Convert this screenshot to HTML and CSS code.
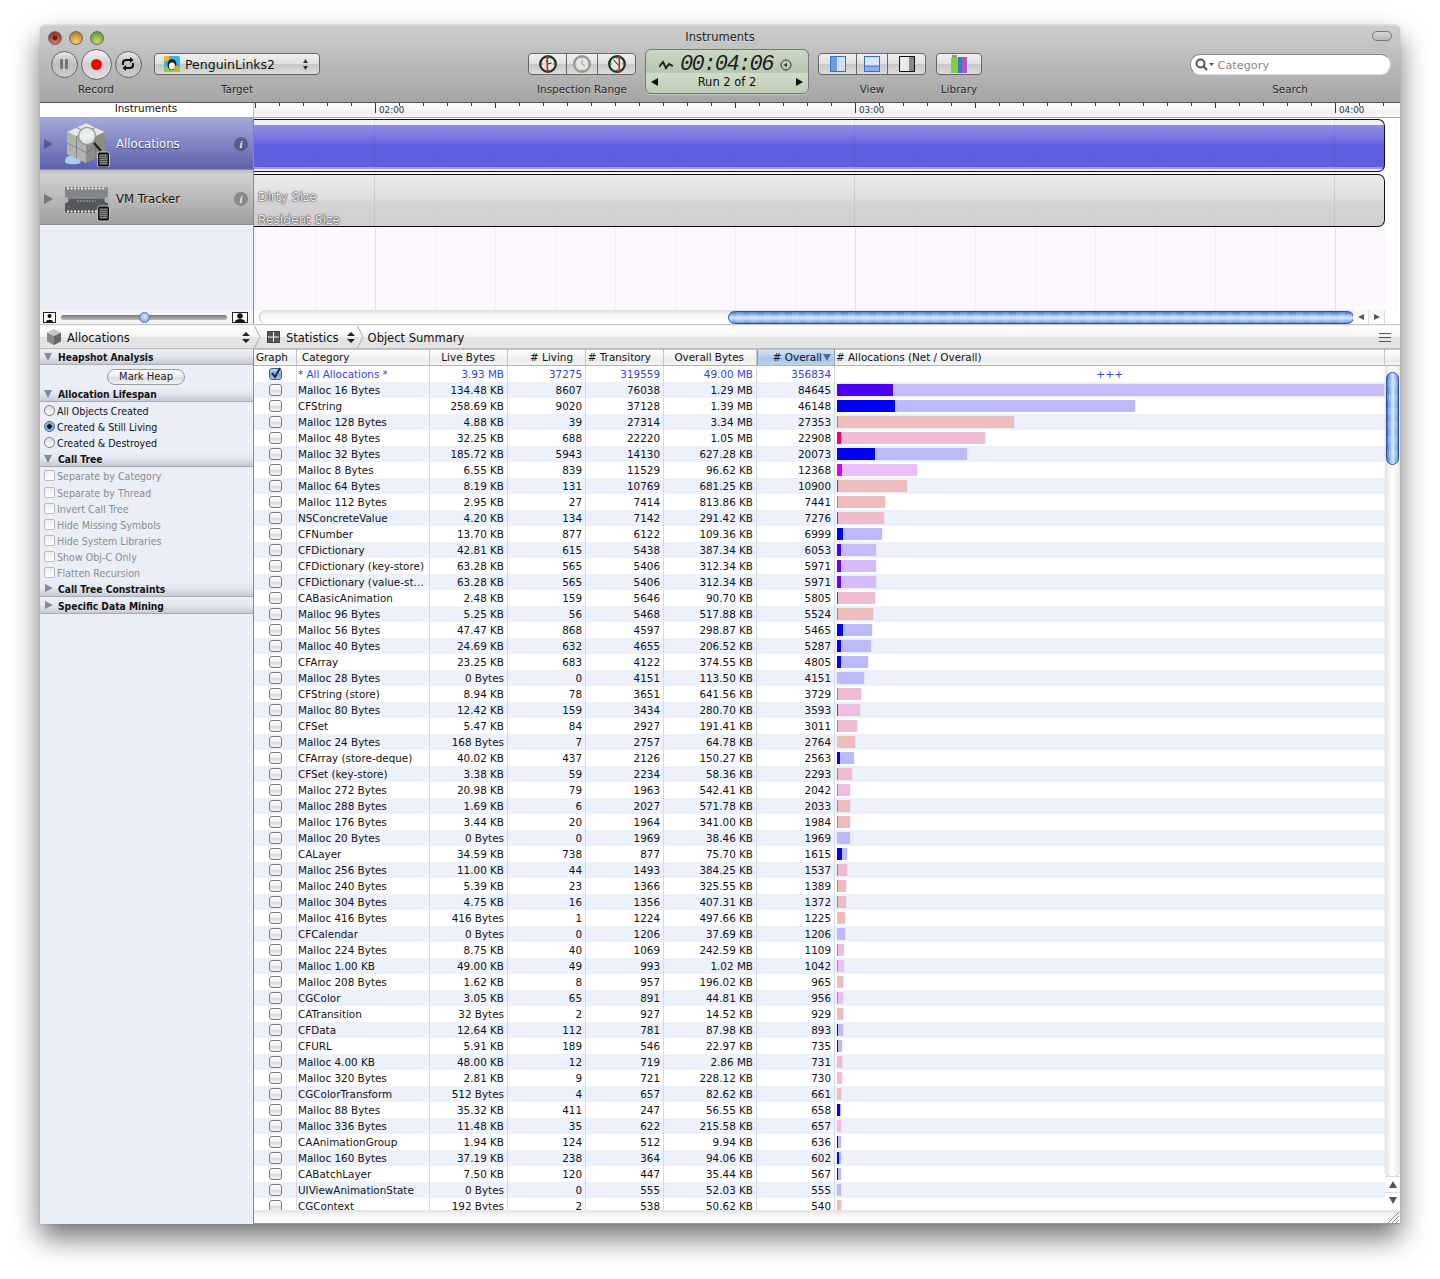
FILE: index.html
```html
<!DOCTYPE html>
<html lang="en">
<head>
<meta charset="utf-8">
<title>Instruments</title>
<link rel="stylesheet" href="styles.css">
</head>
<body>
<div class="window">
  <header class="toolbar">
    <div class="titlebar">
      <div class="lights"><i class="light red"></i><i class="light amber"></i><i class="light green"></i></div>
      <div class="title">Instruments</div>
      <i class="pill"></i>
    </div>
    <div class="tools">
      <div class="tool t-record">
        <div class="control circles">
          <span class="round"><svg width="12" height="12" viewBox="0 0 12 12"><rect x="2" y="1" width="3" height="10" fill="#777"/><rect x="7" y="1" width="3" height="10" fill="#777"/></svg></span>
          <span class="round big"><i class="dot"></i></span>
          <span class="round"><svg width="16" height="16" viewBox="0 0 16 16" fill="none" stroke="#111" stroke-width="2"><path d="M3 9V7a3 3 0 0 1 3-3h6"/><path d="M13 7v2a3 3 0 0 1-3 3H4"/><path d="M10 1l3.500 3L10 7z" fill="#111" stroke="none"/><path d="M6 9l-3.500 3L6 15z" fill="#111" stroke="none"/></svg></span>
        </div>
        <div class="label">Record</div>
      </div>
      <div class="tool t-target">
        <div class="control popup">
          <svg class="appicon" width="16" height="16" viewBox="0 0 16 16"><rect width="16" height="16" rx="2" fill="#35b7e8"/><rect x="0" y="11" width="16" height="5" fill="#8ccf3c"/><rect x="0" y="0" width="5" height="5" fill="#e8b93c"/><ellipse cx="8" cy="8.500" rx="4.500" ry="5.500" fill="#222"/><ellipse cx="8" cy="10" rx="3" ry="3.500" fill="#fff"/><circle cx="12" cy="12" r="2.500" fill="#f0a030"/></svg>
          <span class="popup-text">PenguinLinks2</span>
          <svg width="7" height="11" viewBox="0 0 7 11"><path d="M3.500 0L6 4H1zM3.500 11L6 7H1z" fill="#333"/></svg>
        </div>
        <div class="label">Target</div>
      </div>
      <div class="tool t-range">
        <div class="control seg">
          <span class="seg-cell s1"><svg width="20" height="20" viewBox="0 0 20 20"><circle cx="10" cy="10" r="7.800" fill="#e4e8e4" stroke="#1c3a28" stroke-width="2.400"/><path d="M10 10L8 6.500M10 10l3.500-1" stroke="#222" fill="none"/><path d="M10 4v1M10 15v1M4 10h1M15 10h1" stroke="#555"/><rect x="8.500" y="1" width="1.600" height="18" fill="#d8201c"/></svg></span>
          <span class="seg-cell s2"><svg width="20" height="20" viewBox="0 0 20 20"><circle cx="10" cy="10" r="7.800" fill="#e6e6e0" stroke="#929a90" stroke-width="2.400"/><path d="M10 10V6M10 10l3 2" stroke="#999" fill="none"/><path d="M10 4v1M10 15v1M4 10h1M15 10h1" stroke="#aaa"/></svg></span>
          <span class="seg-cell s3"><svg width="20" height="20" viewBox="0 0 20 20"><circle cx="10" cy="10" r="7.800" fill="#e4e8e4" stroke="#1c3a28" stroke-width="2.400"/><path d="M10 10L7 6M10 10l3 2" stroke="#222" fill="none"/><path d="M10 4v1M10 15v1M4 10h1M15 10h1" stroke="#555"/><rect x="11.500" y="1" width="1.600" height="18" fill="#d8201c"/></svg></span>
        </div>
        <div class="label">Inspection Range</div>
      </div>
      <div class="lcd">
        <div class="lcd-top">
          <svg width="14" height="10" viewBox="0 0 14 10" fill="none" stroke="#222" stroke-width="2"><path d="M0 7l4-5 3 6 3-4 4 2"/></svg>
          <span class="lcd-time">00:04:06</span>
          <svg width="12" height="12" viewBox="0 0 12 12"><circle cx="6" cy="6" r="5" fill="none" stroke="#333"/><path d="M3.500 6l3.500-2v4z" fill="#333"/></svg>
        </div>
        <div class="lcd-run">
          <i class="tri-left"></i>
          <span>Run 2 of 2</span>
          <i class="tri-right"></i>
        </div>
      </div>
      <div class="tool t-view">
        <div class="control seg">
          <span class="seg-cell s1"><svg width="16" height="16" viewBox="0 0 16 16"><rect x=".5" y=".5" width="15" height="15" fill="#d4dff2" stroke="#3a6fd0"/><rect x="1" y="1" width="6" height="14" fill="#6f9be0"/></svg></span>
          <span class="seg-cell s2"><svg width="16" height="16" viewBox="0 0 16 16"><rect x=".5" y=".5" width="15" height="15" fill="#dde6f4" stroke="#3a6fd0"/><rect x="1" y="10" width="14" height="5" fill="#8cb0e8"/><path d="M1 10h14" stroke="#3a6fd0"/></svg></span>
          <span class="seg-cell s3"><svg width="16" height="16" viewBox="0 0 16 16"><rect x=".5" y=".5" width="15" height="15" fill="#e8e8e8" stroke="#111"/><rect x="10" y="1" width="5" height="14" fill="#888"/></svg></span>
        </div>
        <div class="label">View</div>
      </div>
      <div class="tool t-library">
        <div class="control button">
          <svg width="18" height="18" viewBox="0 0 18 18"><rect x="1" y="3" width="7" height="15" fill="#8ccb3a"/><rect x="2" y="0" width="5" height="3" fill="#9a9a80"/><rect x="8" y="2" width="4" height="16" fill="#3b79c8"/><rect x="12" y="2" width="5" height="16" fill="#a65ac8"/></svg>
        </div>
        <div class="label">Library</div>
      </div>
      <div class="tool t-search">
        <div class="control search">
          <svg width="20" height="13" viewBox="0 0 20 13" fill="none" stroke="#555" stroke-width="2"><circle cx="5.500" cy="5.500" r="4"/><path d="M8.500 8.500l3.500 3.500"/><path d="M14 5h5l-2.500 3z" fill="#555" stroke="none"/></svg>
          <span class="placeholder">Category</span>
        </div>
        <div class="label">Search</div>
      </div>
    </div>
  </header>

  <div class="ruler-row">
    <div class="ruler-side">Instruments</div>
    <div class="ruler">
      <div class="ruler-ticks">
        <div class="mark first">02:00</div>
        <div class="mark">03:00</div>
        <div class="mark">04:00</div>
      </div>
    </div>
  </div>

  <div class="timeline">
    <div class="inst-list">
      <div class="inst sel">
        <i class="tri-r"></i>
        <svg class="inst-icon" width="48" height="46" viewBox="0 0 48 46">
          <path d="M3 39c2-6 8-5 12-3s6 6 0 7-13 0-12-4z" fill="#a9cdea"/>
          <path d="M24 2l19 9-19 9-19-9z" fill="#e6e6e2" stroke="#aaa" stroke-width=".5"/>
          <path d="M5 11l19 9v22L5 33z" fill="#b4b4ae"/>
          <path d="M43 11L24 20v22l19-9z" fill="#8d8d86"/>
          <path d="M14.500 15.500v22M5 22l19 9.500M33.500 15.500v22M43 22L24 31.500M14.500 6.500l19 9M33.500 6.500l-19 9" stroke="#777" stroke-width=".8" fill="none"/>
          <circle cx="25" cy="15" r="8.500" fill="#eef2f4" fill-opacity=".85" stroke="#999" stroke-width="1.500"/>
          <path d="M32 22l7 8" stroke="#222" stroke-width="2.500"/>
          <rect x="35.500" y="31" width="12" height="15" rx="2" fill="#111" stroke="#ddd" stroke-width=".8"/>
          <rect x="37.500" y="33.500" width="8" height="10" fill="#888"/>
          <path d="M37.500 35.500h8M37.500 37.500h8M37.500 39.500h8M37.500 41.500h8" stroke="#333" stroke-width=".7"/>
        </svg>
        <span class="inst-name">Allocations</span>
        <i class="info">i</i>
      </div>
      <div class="inst-gap"></div>
      <div class="inst vm">
        <i class="tri-r"></i>
        <svg class="inst-icon" width="48" height="46" viewBox="0 0 48 46">
          <rect x="3" y="11" width="43" height="26" rx="2" fill="#55585a"/>
          <rect x="3" y="11" width="43" height="12" rx="2" fill="#838688"/>
          <path d="M5 12.500h39M5 35.500h39" stroke="#ececec" stroke-width="2" stroke-dasharray="2 1.500"/>
          <circle cx="3.500" cy="24" r="3" fill="#b0b2b4"/>
          <circle cx="45.500" cy="24" r="3" fill="#b0b2b4"/>
          <path d="M15 22h19M15 25h19" stroke="#8c8e90" stroke-width="1.500" stroke-dasharray="2 1"/>
          <rect x="35.500" y="30" width="12" height="15" rx="2" fill="#111" stroke="#ddd" stroke-width=".8"/>
          <rect x="37.500" y="32.500" width="8" height="10" fill="#888"/>
          <path d="M37.500 34.500h8M37.500 36.500h8M37.500 38.500h8M37.500 40.500h8" stroke="#333" stroke-width=".7"/>
        </svg>
        <span class="inst-name">VM Tracker</span>
        <i class="info">i</i>
      </div>
    </div>
    <div class="tracks">
      <div class="track purple"></div>
      <div class="track grey">
        <div class="track-label">Dirty Size</div>
        <div class="track-label">Resident Size</div>
      </div>
    </div>
  </div>

  <div class="slider-row">
    <div class="zoomer">
      <svg width="13" height="11" viewBox="0 0 13 11"><rect x=".5" y=".5" width="12" height="10" fill="#fff" stroke="#222"/><circle cx="6.500" cy="4" r="2" fill="#111"/><path d="M3 10c0-3 7-3 7 0z" fill="#111"/></svg>
      <div class="zoom-track"><i class="zoom-knob"></i></div>
      <svg width="16" height="11" viewBox="0 0 16 11"><rect x=".5" y=".5" width="15" height="10" fill="#fff" stroke="#222"/><circle cx="8" cy="4" r="2.800" fill="#111"/><path d="M3 10c0-4 10-4 10 0z" fill="#111"/></svg>
    </div>
    <div class="hscroll">
      <div class="hscroll-track"><i class="hthumb"></i></div>
      <span class="harrow"><i class="tri-left small"></i></span>
      <span class="harrow"><i class="tri-right small"></i></span>
    </div>
  </div>

  <div class="jumpbar">
    <div class="jump-first">
      <svg width="18" height="18" viewBox="0 0 18 18"><path d="M9 1l7 3.500L9 8 2 4.500z" fill="#c8c8c8"/><path d="M2 4.500L9 8v9l-7-3.500z" fill="#888"/><path d="M16 4.500L9 8v9l7-3.500z" fill="#666"/></svg>
      <span class="jump-name">Allocations</span>
      <i class="updown"></i>
    </div>
    <svg class="crumb" width="7" height="22" viewBox="0 0 7 22"><path d="M.5 0l5.500 11L.5 22" fill="none" stroke="#aaa"/></svg>
    <svg class="gridicon" width="13" height="12" viewBox="0 0 13 12"><rect x=".5" y=".5" width="12" height="11" fill="#fff" stroke="#444"/><rect x="1" y="1" width="5" height="4.500" fill="#555"/><rect x="7" y="1" width="5" height="4.500" fill="#555"/><rect x="1" y="6.500" width="5" height="4.500" fill="#555"/><rect x="7" y="6.500" width="5" height="4.500" fill="#555"/></svg>
    <span class="jump-name stats">Statistics</span>
    <i class="updown"></i>
    <svg class="crumb second" width="7" height="22" viewBox="0 0 7 22"><path d="M.5 0l5.500 11L.5 22" fill="none" stroke="#aaa"/></svg>
    <span class="jump-name">Object Summary</span>
    <svg class="listicon" width="12" height="9" viewBox="0 0 12 9" stroke="#555"><path d="M0 .5h12M0 4.500h12M0 8.500h12"/></svg>
  </div>

  <div class="detail">
    <aside class="side">
      <div class="sec open">Heapshot Analysis</div>
      <div class="mark-row"><button class="markheap">Mark Heap</button></div>
      <div class="sec open after">Allocation Lifespan</div>
      <div class="opt"><i class="radio"></i>All Objects Created</div>
      <div class="opt"><i class="radio on"></i>Created &amp; Still Living</div>
      <div class="opt"><i class="radio"></i>Created &amp; Destroyed</div>
      <div class="sec open">Call Tree</div>
      <div class="opt off tall"><i class="box"></i>Separate by Category</div>
      <div class="opt off"><i class="box"></i>Separate by Thread</div>
      <div class="opt off"><i class="box"></i>Invert Call Tree</div>
      <div class="opt off"><i class="box"></i>Hide Missing Symbols</div>
      <div class="opt off"><i class="box"></i>Hide System Libraries</div>
      <div class="opt off"><i class="box"></i>Show Obj-C Only</div>
      <div class="opt off"><i class="box"></i>Flatten Recursion</div>
      <div class="sec shut">Call Tree Constraints</div>
      <div class="sec shut">Specific Data Mining</div>
    </aside>
    <main class="main">
      <div class="table-area">
        <div class="table-clip">
          <table class="stats-table">
            <colgroup><col class="c1"><col class="c2"><col class="c3"><col class="c4"><col class="c5"><col class="c6"><col class="c7"><col class="c8"></colgroup>
            <thead>
              <tr><th class="th-left tight">Graph</th><th class="th-left">Category</th><th>Live Bytes</th><th># Living</th><th># Transitory</th><th>Overall Bytes</th><th class="sorted"># Overall<i class="sort-arrow"></i></th><th class="th-left th-last"># Allocations (Net / Overall)</th></tr>
            </thead>
            <tbody>
              <tr class="all"><td class="g"><i class="cb on"><svg width="12" height="12" viewBox="0 0 12 12"><path d="M2 6l3 4 5-9" fill="none" stroke="#1a2a50" stroke-width="2"/></svg></i></td><td class="name">* All Allocations *</td><td class="n">3.93 MB</td><td class="n">37275</td><td class="n">319559</td><td class="n">49.00 MB</td><td class="n">356834</td><td class="plus">+++</td></tr>
              <tr><td class="g"><i class="cb"></i></td><td class="name">Malloc 16 Bytes</td><td class="n">134.48 KB</td><td class="n">8607</td><td class="n">76038</td><td class="n">1.29 MB</td><td class="n">84645</td><td class="b"><span class="bar violet" style="width:547px"><i class="net" style="width:55.6px"></i></span></td></tr>
              <tr><td class="g"><i class="cb"></i></td><td class="name">CFString</td><td class="n">258.69 KB</td><td class="n">9020</td><td class="n">37128</td><td class="n">1.39 MB</td><td class="n">46148</td><td class="b"><span class="bar blue" style="width:298.2px"><i class="net" style="width:58.3px"></i></span></td></tr>
              <tr><td class="g"><i class="cb"></i></td><td class="name">Malloc 128 Bytes</td><td class="n">4.88 KB</td><td class="n">39</td><td class="n">27314</td><td class="n">3.34 MB</td><td class="n">27353</td><td class="b"><span class="bar red" style="width:176.8px"><i class="net tiny"></i></span></td></tr>
              <tr><td class="g"><i class="cb"></i></td><td class="name">Malloc 48 Bytes</td><td class="n">32.25 KB</td><td class="n">688</td><td class="n">22220</td><td class="n">1.05 MB</td><td class="n">22908</td><td class="b"><span class="bar rose" style="width:148px"><i class="net" style="width:4.4px"></i></span></td></tr>
              <tr><td class="g"><i class="cb"></i></td><td class="name">Malloc 32 Bytes</td><td class="n">185.72 KB</td><td class="n">5943</td><td class="n">14130</td><td class="n">627.28 KB</td><td class="n">20073</td><td class="b"><span class="bar blue" style="width:129.7px"><i class="net" style="width:38.4px"></i></span></td></tr>
              <tr><td class="g"><i class="cb"></i></td><td class="name">Malloc 8 Bytes</td><td class="n">6.55 KB</td><td class="n">839</td><td class="n">11529</td><td class="n">96.62 KB</td><td class="n">12368</td><td class="b"><span class="bar magenta" style="width:79.9px"><i class="net" style="width:5.4px"></i></span></td></tr>
              <tr><td class="g"><i class="cb"></i></td><td class="name">Malloc 64 Bytes</td><td class="n">8.19 KB</td><td class="n">131</td><td class="n">10769</td><td class="n">681.25 KB</td><td class="n">10900</td><td class="b"><span class="bar red" style="width:70.4px"><i class="net" style="width:1px"></i></span></td></tr>
              <tr><td class="g"><i class="cb"></i></td><td class="name">Malloc 112 Bytes</td><td class="n">2.95 KB</td><td class="n">27</td><td class="n">7414</td><td class="n">813.86 KB</td><td class="n">7441</td><td class="b"><span class="bar red" style="width:48px"><i class="net tiny"></i></span></td></tr>
              <tr><td class="g"><i class="cb"></i></td><td class="name">NSConcreteValue</td><td class="n">4.20 KB</td><td class="n">134</td><td class="n">7142</td><td class="n">291.42 KB</td><td class="n">7276</td><td class="b"><span class="bar rose2" style="width:47px"><i class="net" style="width:1px"></i></span></td></tr>
              <tr><td class="g"><i class="cb"></i></td><td class="name">CFNumber</td><td class="n">13.70 KB</td><td class="n">877</td><td class="n">6122</td><td class="n">109.36 KB</td><td class="n">6999</td><td class="b"><span class="bar blue" style="width:45.2px"><i class="net" style="width:5.7px"></i></span></td></tr>
              <tr><td class="g"><i class="cb"></i></td><td class="name">CFDictionary</td><td class="n">42.81 KB</td><td class="n">615</td><td class="n">5438</td><td class="n">387.34 KB</td><td class="n">6053</td><td class="b"><span class="bar violet" style="width:39.1px"><i class="net" style="width:4px"></i></span></td></tr>
              <tr><td class="g"><i class="cb"></i></td><td class="name">CFDictionary (key-store)</td><td class="n">63.28 KB</td><td class="n">565</td><td class="n">5406</td><td class="n">312.34 KB</td><td class="n">5971</td><td class="b"><span class="bar purple" style="width:38.6px"><i class="net" style="width:3.7px"></i></span></td></tr>
              <tr><td class="g"><i class="cb"></i></td><td class="name">CFDictionary (value-st…</td><td class="n">63.28 KB</td><td class="n">565</td><td class="n">5406</td><td class="n">312.34 KB</td><td class="n">5971</td><td class="b"><span class="bar purple" style="width:38.6px"><i class="net" style="width:3.7px"></i></span></td></tr>
              <tr><td class="g"><i class="cb"></i></td><td class="name">CABasicAnimation</td><td class="n">2.48 KB</td><td class="n">159</td><td class="n">5646</td><td class="n">90.70 KB</td><td class="n">5805</td><td class="b"><span class="bar rose" style="width:37.5px"><i class="net" style="width:1px"></i></span></td></tr>
              <tr><td class="g"><i class="cb"></i></td><td class="name">Malloc 96 Bytes</td><td class="n">5.25 KB</td><td class="n">56</td><td class="n">5468</td><td class="n">517.88 KB</td><td class="n">5524</td><td class="b"><span class="bar red" style="width:35.7px"><i class="net tiny"></i></span></td></tr>
              <tr><td class="g"><i class="cb"></i></td><td class="name">Malloc 56 Bytes</td><td class="n">47.47 KB</td><td class="n">868</td><td class="n">4597</td><td class="n">298.87 KB</td><td class="n">5465</td><td class="b"><span class="bar blue" style="width:35.3px"><i class="net" style="width:5.6px"></i></span></td></tr>
              <tr><td class="g"><i class="cb"></i></td><td class="name">Malloc 40 Bytes</td><td class="n">24.69 KB</td><td class="n">632</td><td class="n">4655</td><td class="n">206.52 KB</td><td class="n">5287</td><td class="b"><span class="bar blue" style="width:34.2px"><i class="net" style="width:4px"></i></span></td></tr>
              <tr><td class="g"><i class="cb"></i></td><td class="name">CFArray</td><td class="n">23.25 KB</td><td class="n">683</td><td class="n">4122</td><td class="n">374.55 KB</td><td class="n">4805</td><td class="b"><span class="bar blue" style="width:31px"><i class="net" style="width:4.4px"></i></span></td></tr>
              <tr><td class="g"><i class="cb"></i></td><td class="name">Malloc 28 Bytes</td><td class="n">0 Bytes</td><td class="n">0</td><td class="n">4151</td><td class="n">113.50 KB</td><td class="n">4151</td><td class="b"><span class="bar blue" style="width:26.8px"></span></td></tr>
              <tr><td class="g"><i class="cb"></i></td><td class="name">CFString (store)</td><td class="n">8.94 KB</td><td class="n">78</td><td class="n">3651</td><td class="n">641.56 KB</td><td class="n">3729</td><td class="b"><span class="bar rose" style="width:24px"><i class="net tiny"></i></span></td></tr>
              <tr><td class="g"><i class="cb"></i></td><td class="name">Malloc 80 Bytes</td><td class="n">12.42 KB</td><td class="n">159</td><td class="n">3434</td><td class="n">280.70 KB</td><td class="n">3593</td><td class="b"><span class="bar orchid" style="width:23.2px"><i class="net" style="width:1px"></i></span></td></tr>
              <tr><td class="g"><i class="cb"></i></td><td class="name">CFSet</td><td class="n">5.47 KB</td><td class="n">84</td><td class="n">2927</td><td class="n">191.41 KB</td><td class="n">3011</td><td class="b"><span class="bar rose" style="width:19.5px"><i class="net tiny"></i></span></td></tr>
              <tr><td class="g"><i class="cb"></i></td><td class="name">Malloc 24 Bytes</td><td class="n">168 Bytes</td><td class="n">7</td><td class="n">2757</td><td class="n">64.78 KB</td><td class="n">2764</td><td class="b"><span class="bar red" style="width:17.9px"></span></td></tr>
              <tr><td class="g"><i class="cb"></i></td><td class="name">CFArray (store-deque)</td><td class="n">40.02 KB</td><td class="n">437</td><td class="n">2126</td><td class="n">150.27 KB</td><td class="n">2563</td><td class="b"><span class="bar blue" style="width:16.6px"><i class="net" style="width:2.8px"></i></span></td></tr>
              <tr><td class="g"><i class="cb"></i></td><td class="name">CFSet (key-store)</td><td class="n">3.38 KB</td><td class="n">59</td><td class="n">2234</td><td class="n">58.36 KB</td><td class="n">2293</td><td class="b"><span class="bar rose" style="width:14.8px"><i class="net tiny"></i></span></td></tr>
              <tr><td class="g"><i class="cb"></i></td><td class="name">Malloc 272 Bytes</td><td class="n">20.98 KB</td><td class="n">79</td><td class="n">1963</td><td class="n">542.41 KB</td><td class="n">2042</td><td class="b"><span class="bar orchid" style="width:13.2px"><i class="net tiny"></i></span></td></tr>
              <tr><td class="g"><i class="cb"></i></td><td class="name">Malloc 288 Bytes</td><td class="n">1.69 KB</td><td class="n">6</td><td class="n">2027</td><td class="n">571.78 KB</td><td class="n">2033</td><td class="b"><span class="bar red" style="width:13.1px"><i class="net tiny"></i></span></td></tr>
              <tr><td class="g"><i class="cb"></i></td><td class="name">Malloc 176 Bytes</td><td class="n">3.44 KB</td><td class="n">20</td><td class="n">1964</td><td class="n">341.00 KB</td><td class="n">1984</td><td class="b"><span class="bar red" style="width:12.8px"><i class="net tiny"></i></span></td></tr>
              <tr><td class="g"><i class="cb"></i></td><td class="name">Malloc 20 Bytes</td><td class="n">0 Bytes</td><td class="n">0</td><td class="n">1969</td><td class="n">38.46 KB</td><td class="n">1969</td><td class="b"><span class="bar blue" style="width:12.7px"></span></td></tr>
              <tr><td class="g"><i class="cb"></i></td><td class="name">CALayer</td><td class="n">34.59 KB</td><td class="n">738</td><td class="n">877</td><td class="n">75.70 KB</td><td class="n">1615</td><td class="b"><span class="bar blue" style="width:10.4px"><i class="net" style="width:4.8px"></i></span></td></tr>
              <tr><td class="g"><i class="cb"></i></td><td class="name">Malloc 256 Bytes</td><td class="n">11.00 KB</td><td class="n">44</td><td class="n">1493</td><td class="n">384.25 KB</td><td class="n">1537</td><td class="b"><span class="bar rose" style="width:9.9px"><i class="net tiny"></i></span></td></tr>
              <tr><td class="g"><i class="cb"></i></td><td class="name">Malloc 240 Bytes</td><td class="n">5.39 KB</td><td class="n">23</td><td class="n">1366</td><td class="n">325.55 KB</td><td class="n">1389</td><td class="b"><span class="bar red" style="width:9px"><i class="net tiny"></i></span></td></tr>
              <tr><td class="g"><i class="cb"></i></td><td class="name">Malloc 304 Bytes</td><td class="n">4.75 KB</td><td class="n">16</td><td class="n">1356</td><td class="n">407.31 KB</td><td class="n">1372</td><td class="b"><span class="bar red" style="width:8.9px"><i class="net tiny"></i></span></td></tr>
              <tr><td class="g"><i class="cb"></i></td><td class="name">Malloc 416 Bytes</td><td class="n">416 Bytes</td><td class="n">1</td><td class="n">1224</td><td class="n">497.66 KB</td><td class="n">1225</td><td class="b"><span class="bar red" style="width:7.9px"></span></td></tr>
              <tr><td class="g"><i class="cb"></i></td><td class="name">CFCalendar</td><td class="n">0 Bytes</td><td class="n">0</td><td class="n">1206</td><td class="n">37.69 KB</td><td class="n">1206</td><td class="b"><span class="bar blue" style="width:7.8px"></span></td></tr>
              <tr><td class="g"><i class="cb"></i></td><td class="name">Malloc 224 Bytes</td><td class="n">8.75 KB</td><td class="n">40</td><td class="n">1069</td><td class="n">242.59 KB</td><td class="n">1109</td><td class="b"><span class="bar orchid" style="width:7.2px"><i class="net tiny"></i></span></td></tr>
              <tr><td class="g"><i class="cb"></i></td><td class="name">Malloc 1.00 KB</td><td class="n">49.00 KB</td><td class="n">49</td><td class="n">993</td><td class="n">1.02 MB</td><td class="n">1042</td><td class="b"><span class="bar magenta" style="width:6.7px"><i class="net tiny"></i></span></td></tr>
              <tr><td class="g"><i class="cb"></i></td><td class="name">Malloc 208 Bytes</td><td class="n">1.62 KB</td><td class="n">8</td><td class="n">957</td><td class="n">196.02 KB</td><td class="n">965</td><td class="b"><span class="bar red" style="width:6.2px"></span></td></tr>
              <tr><td class="g"><i class="cb"></i></td><td class="name">CGColor</td><td class="n">3.05 KB</td><td class="n">65</td><td class="n">891</td><td class="n">44.81 KB</td><td class="n">956</td><td class="b"><span class="bar magenta" style="width:6.2px"><i class="net tiny"></i></span></td></tr>
              <tr><td class="g"><i class="cb"></i></td><td class="name">CATransition</td><td class="n">32 Bytes</td><td class="n">2</td><td class="n">927</td><td class="n">14.52 KB</td><td class="n">929</td><td class="b"><span class="bar red" style="width:6px"></span></td></tr>
              <tr><td class="g"><i class="cb"></i></td><td class="name">CFData</td><td class="n">12.64 KB</td><td class="n">112</td><td class="n">781</td><td class="n">87.98 KB</td><td class="n">893</td><td class="b"><span class="bar blue" style="width:5.8px"><i class="net" style="width:1px"></i></span></td></tr>
              <tr><td class="g"><i class="cb"></i></td><td class="name">CFURL</td><td class="n">5.91 KB</td><td class="n">189</td><td class="n">546</td><td class="n">22.97 KB</td><td class="n">735</td><td class="b"><span class="bar blue" style="width:4.7px"><i class="net" style="width:1.2px"></i></span></td></tr>
              <tr><td class="g"><i class="cb"></i></td><td class="name">Malloc 4.00 KB</td><td class="n">48.00 KB</td><td class="n">12</td><td class="n">719</td><td class="n">2.86 MB</td><td class="n">731</td><td class="b"><span class="bar rose" style="width:4.7px"></span></td></tr>
              <tr><td class="g"><i class="cb"></i></td><td class="name">Malloc 320 Bytes</td><td class="n">2.81 KB</td><td class="n">9</td><td class="n">721</td><td class="n">228.12 KB</td><td class="n">730</td><td class="b"><span class="bar rose" style="width:4.7px"></span></td></tr>
              <tr><td class="g"><i class="cb"></i></td><td class="name">CGColorTransform</td><td class="n">512 Bytes</td><td class="n">4</td><td class="n">657</td><td class="n">82.62 KB</td><td class="n">661</td><td class="b"><span class="bar red" style="width:4.3px"></span></td></tr>
              <tr><td class="g"><i class="cb"></i></td><td class="name">Malloc 88 Bytes</td><td class="n">35.32 KB</td><td class="n">411</td><td class="n">247</td><td class="n">56.55 KB</td><td class="n">658</td><td class="b"><span class="bar blue" style="width:4.3px"><i class="net" style="width:2.7px"></i></span></td></tr>
              <tr><td class="g"><i class="cb"></i></td><td class="name">Malloc 336 Bytes</td><td class="n">11.48 KB</td><td class="n">35</td><td class="n">622</td><td class="n">215.58 KB</td><td class="n">657</td><td class="b"><span class="bar orchid" style="width:4.2px"></span></td></tr>
              <tr><td class="g"><i class="cb"></i></td><td class="name">CAAnimationGroup</td><td class="n">1.94 KB</td><td class="n">124</td><td class="n">512</td><td class="n">9.94 KB</td><td class="n">636</td><td class="b"><span class="bar blue" style="width:4.1px"><i class="net" style="width:1px"></i></span></td></tr>
              <tr><td class="g"><i class="cb"></i></td><td class="name">Malloc 160 Bytes</td><td class="n">37.19 KB</td><td class="n">238</td><td class="n">364</td><td class="n">94.06 KB</td><td class="n">602</td><td class="b"><span class="bar blue" style="width:3.9px"><i class="net" style="width:1.5px"></i></span></td></tr>
              <tr><td class="g"><i class="cb"></i></td><td class="name">CABatchLayer</td><td class="n">7.50 KB</td><td class="n">120</td><td class="n">447</td><td class="n">35.44 KB</td><td class="n">567</td><td class="b"><span class="bar blue" style="width:3.7px"><i class="net" style="width:1px"></i></span></td></tr>
              <tr><td class="g"><i class="cb"></i></td><td class="name">UIViewAnimationState</td><td class="n">0 Bytes</td><td class="n">0</td><td class="n">555</td><td class="n">52.03 KB</td><td class="n">555</td><td class="b"><span class="bar blue" style="width:3.6px"></span></td></tr>
              <tr><td class="g"><i class="cb"></i></td><td class="name">CGContext</td><td class="n">192 Bytes</td><td class="n">2</td><td class="n">538</td><td class="n">50.62 KB</td><td class="n">540</td><td class="b"><span class="bar red" style="width:3.5px"></span></td></tr>
            </tbody>
          </table>
        </div>
        <div class="vscroll">
          <div class="vcorner"></div>
          <div class="vtrack"><i class="vthumb"></i></div>
          <span class="varrow"><i class="tri-up"></i></span>
          <span class="varrow"><i class="tri-down"></i></span>
        </div>
      </div>
      <div class="footer">
        <svg class="grip" width="11" height="11" viewBox="0 0 11 11" stroke="#888" fill="none"><path d="M0 11L11 0M4 11l7-7M8 11l3-3"/></svg>
      </div>
    </main>
  </div>
</div>
</body>
</html>
```

FILE: styles.css
```css
* { box-sizing: border-box; }
html, body { margin: 0; padding: 0; background: #fff; }
body { height: 1279px; overflow: hidden; padding: 25px 40px 0; font: 10.4px/16px "DejaVu Sans", sans-serif; color: #111; }
i { display: block; font-style: normal; }

.window { width: 1360px; height: 1199px; display: flex; flex-direction: column; border-radius: 5px 5px 0 0; box-shadow: 0 14px 28px rgba(0,0,0,.55), 0 0 1px rgba(0,0,0,.5); background: #e9eef7; }

/* toolbar */
.toolbar { height: 77px; flex: none; background: linear-gradient(#cdcdcd, #a6a6a6); border-radius: 5px 5px 0 0; border-top: 1px solid #d8d8d8; }
.titlebar { height: 23px; display: flex; align-items: center; padding: 0 8px; }
.lights { display: flex; gap: 7px; margin-top: 1px; }
.light { width: 14px; height: 14px; border-radius: 50%; border: 1px solid #6a6a6a; }
.light.red { background: radial-gradient(circle at 50% 50%, #6d1a14 0 2px, transparent 3px), radial-gradient(circle at 50% 80%, #e07a66, #a5352a 75%); }
.light.amber { background: radial-gradient(circle at 50% 80%, #f8d070, #c07a20 80%); }
.light.green { background: radial-gradient(circle at 50% 80%, #c0e070, #6a9a30 80%); }
.title { flex: 1; text-align: center; font-size: 11.5px; line-height: 20px; padding-bottom: 2px; color: #222; text-shadow: 0 1px 0 rgba(255,255,255,.4); padding-right: 36px; }
.pill { width: 20px; height: 10px; border-radius: 5px; border: 1px solid #777; background: linear-gradient(#d6d6d6, #b8b8b8); margin-bottom: 3px; }
.tools { display: flex; align-items: flex-start; padding-left: 11px; }
.tool { display: flex; flex-direction: column; align-items: center; padding-top: 4px; }
.control { height: 22px; display: flex; align-items: center; }
.label { margin-top: 6px; height: 16px; color: #2a2a2a; text-shadow: 0 1px 0 rgba(255,255,255,.35); white-space: nowrap; }

.t-record { width: 90px; }
.circles { gap: 3px; }
.round { width: 27px; height: 27px; border-radius: 50%; border: 1px solid #666; background: linear-gradient(#e9e9e9, #bdbdbd 50%, #cfcfcf); display: flex; align-items: center; justify-content: center; flex: none; }
.round.big { width: 31px; height: 31px; background: linear-gradient(#f4f4f4, #d0d0d0 50%, #e0e0e0); }
.dot { width: 11px; height: 11px; border-radius: 50%; background: #f00; }
.t-target { width: 166px; margin-left: 13px; }
.popup { width: 166px; padding: 0 10px 0 9px; border: 1px solid #666; border-radius: 4px; background: linear-gradient(#f0f0f0, #e0e0e0 50%, #c8c8c8 52%, #dcdcdc); gap: 6px; }
.popup-text { flex: 1; font-size: 12.5px; line-height: 20px; padding-top: 1px; margin-left: -1px; }
.t-range { width: 108px; margin-left: 208px; }
.seg { width: 100%; border: 1px solid #666; border-radius: 4px; background: linear-gradient(#f0f0f0, #e0e0e0 50%, #c8c8c8 52%, #dcdcdc); overflow: hidden; }
.seg-cell { height: 100%; display: flex; align-items: center; justify-content: center; border-right: 1px solid #666; }
.seg-cell.s1 { width: 38px; }
.seg-cell.s2 { width: 31px; }
.seg-cell.s3 { flex: 1; border-right: 0; }
.lcd { width: 164px; height: 45px; margin-left: 9px; border: 1px solid #777; border-radius: 6px; background: linear-gradient(#c9d8c2, #b4c8ae 52%, #cfddc8 54%, #bccdb5); box-shadow: 0 1px 0 rgba(255,255,255,.3); }
.lcd-top { height: 22px; display: flex; align-items: center; padding: 7px 16px 0 13px; }
.lcd-time { flex: 1; font: italic 22px/15px "Liberation Mono", monospace; letter-spacing: -1.6px; color: #1c1c1c; padding-left: 7px; white-space: nowrap; }
.lcd-run { height: 19px; display: flex; align-items: center; justify-content: space-between; padding: 0 5px; font-size: 11.5px; line-height: 14px; }
.tri-left { width: 0; height: 0; border: 4px solid transparent; border-left: 0; border-right: 7px solid #111; }
.tri-right { width: 0; height: 0; border: 4px solid transparent; border-right: 0; border-left: 7px solid #111; }
.t-view { width: 108px; margin-left: 9px; }
.t-library { width: 46px; margin-left: 10px; }
.button { width: 46px; justify-content: center; border: 1px solid #666; border-radius: 4px; background: linear-gradient(#f0f0f0, #e0e0e0 50%, #c8c8c8 52%, #dcdcdc); }
.t-search { width: 200px; margin-left: 208px; }
.search { width: 201px; height: 21px; margin-top: 1px; background: #fff; border: 1px solid #8a8a8a; border-bottom-color: #ddd; border-right-color: #ccc; border-radius: 10px; padding-left: 4px; gap: 2px; font-size: 11.3px; line-height: 17px; color: #888; }
.t-search .label { margin-top: 6px; }
.placeholder { padding-left: 1px; padding-top: 2px; }

/* ruler */
.ruler-row { height: 16px; flex: none; display: flex; border-top: 1px solid #555; border-bottom: 1px solid #aaa; background: linear-gradient(#fff, #f0f0f0 70%, #f8f8f8); }
.ruler-side { width: 214px; text-align: center; line-height: 11px; padding-right: 1px; background: #fff; border-right: 1px solid #bbb; }
.ruler { flex: 1; }
.ruler-ticks { width: 1131px; height: 100%; display: flex; align-items: flex-start; overflow: hidden; background: linear-gradient(90deg, #333 1px, transparent 1px) 1px 0 / 24px 3px repeat-x, linear-gradient(90deg, #333 1px, transparent 1px) 1px 0 / 240px 5px repeat-x; }
.mark { width: 480px; height: 10px; flex: none; border-left: 1px solid #333; padding-left: 3px; font-size: 8.8px; line-height: 14px; color: #333; white-space: nowrap; }
.mark.first { margin-left: 121px; }

/* timeline */
.timeline { height: 192px; flex: none; display: flex; }
.inst-list { width: 214px; flex: none; border-right: 1px solid #8a8a8a; background: #e9eef7; }
.inst { height: 52px; display: flex; align-items: center; padding: 0 5px 0 4px; border-bottom: 1px solid #8f8f8f; }
.inst.sel { background: linear-gradient(#a3a8dc, #5c62ab); color: #fff; text-shadow: 0 1px 1px rgba(0,0,0,.6); }
.inst.vm { background: linear-gradient(#d2d2d2, #a0a0a0); text-shadow: 0 1px 0 rgba(255,255,255,.5); }
.inst-gap { height: 3px; background: #c4c4c4; }
.tri-r { width: 0; height: 0; border: 5px solid transparent; border-right: 0; border-left: 9px solid rgba(50,55,100,.55); flex: none; }
.vm .tri-r { border-left-color: #777; }
.inst-icon { margin-left: 9px; flex: none; }
.inst-name { flex: 1; margin-left: 6px; font-size: 11.7px; }
.info { width: 14px; height: 14px; border-radius: 50%; background: rgba(60,60,90,.55); color: #eee; text-align: center; font: italic bold 11px/14px "Liberation Serif", serif; text-shadow: none; flex: none; }
.vm .info { background: #888; }
.tracks { flex: 1; padding-right: 15px; background: linear-gradient(90deg, rgba(0,0,0,.06) 1px, transparent 1px) 121px 0 / 480px 100% repeat-x, linear-gradient(90deg, rgba(0,0,0,.04) 1px, transparent 1px) 1px 0 / 60px 100% repeat-x, linear-gradient(#fdf8fd, #fdf8fd) 0 0 / 1131px 100% no-repeat, #fff; }
.track { border: 1px solid #111; border-left: 0; border-radius: 0 7px 7px 0; }
.track.purple { height: 53px; margin-top: 1px; background: linear-gradient(90deg, rgba(0,0,0,.05) 1px, transparent 1px) 120px 0 / 480px 100%, linear-gradient(90deg, rgba(0,0,0,.02) 1px, transparent 1px) 0 0 / 60px 100%, linear-gradient(#f0f0f8 0 5px, #8f8fe8 5px, #7272e2 20px, #6060e0 25px, #5f5fdf 47px, #9a9aee 47px, #9a9aee 49px, #f0f0f8 49px); }
.track.grey { height: 53px; margin-top: 2px; padding: 15px 0 0 4px; background: linear-gradient(90deg, rgba(0,0,0,.06) 1px, transparent 1px) 120px 0 / 480px 100%, linear-gradient(90deg, rgba(0,0,0,.02) 1px, transparent 1px) 0 0 / 60px 100%, linear-gradient(#ececec, #dcdcdc 25px, #d5d3d5 26px, #d0ced0); }
.track-label { height: 23px; font-size: 12.2px; line-height: 15px; color: #f4f4f4; text-shadow: 0 0 1px #000, 0 0 2px #444; white-space: nowrap; }

/* slider + scroller */
.slider-row { height: 15px; flex: none; display: flex; background: linear-gradient(#fff, #f2f2f2); border-bottom: 1px solid #c4c4c4; }
.zoomer { width: 214px; flex: none; display: flex; align-items: center; gap: 4px; padding: 0 5px 0 3px; border-right: 1px solid #8a8a8a; background: #f4f4f4; }
.zoom-track { flex: 1; height: 5px; border-radius: 3px; margin: 0 1px; background: linear-gradient(#777, #bbb); display: flex; align-items: center; padding-left: 78px; }
.zoom-knob { width: 11px; height: 11px; border-radius: 50%; border: 1px solid #5a78a8; background: radial-gradient(circle at 50% 40%, #d8e8fa, #6f9ad8); flex: none; }
.hscroll { flex: 1; display: flex; align-items: center; height: 100%; background: #fff; padding-left: 5px; }
.hscroll-track { width: 1094px; height: 14px; padding-left: 468px; border-radius: 7px 0 0 7px; background: linear-gradient(#ddd, #fafafa 40%, #fff); border-left: 1px solid #bbb; display: flex; align-items: center; }
.hthumb { width: 626px; height: 13px; border-radius: 7px; border: 1px solid #2d4f9c; background: repeating-linear-gradient(90deg, transparent 0 7px, rgba(255,255,255,.12) 7px 14px), linear-gradient(#3c74cf, #a8ccf6 35%, #d4e6fc 55%, #88b4ee 85%, #5a8ce0); flex: none; }
.harrow { width: 16px; height: 100%; display: flex; align-items: center; justify-content: center; border-right: 1px solid #ddd; background: linear-gradient(#f4f4f4, #fff); }
.tri-left.small { border-width: 3.500px; border-left: 0; border-right: 6px solid #555; }
.tri-right.small { border-width: 3.500px; border-right: 0; border-left: 6px solid #555; }

/* jump bar */
.jumpbar { height: 24px; flex: none; display: flex; align-items: center; background: linear-gradient(#fff, #f4f4f4 50%, #e3e3e3 50%, #e3e3e3); border-top: 1px solid #f4f4f4; border-bottom: 1px solid #bbb; }
.jump-first { width: 214px; flex: none; display: flex; align-items: center; padding: 0 4px 0 5px; }
.jump-name { font-size: 11.5px; line-height: 20px; padding-top: 2px; white-space: nowrap; }
.jump-first .jump-name { flex: 1; margin-left: 4px; }
.updown { width: 8px; height: 11px; flex: none; position: relative; }
.updown::before, .updown::after { content: ""; position: absolute; left: 0; border: 4px solid transparent; border-top: 0; border-bottom: 4px solid #222; }
.updown::before { top: 0; }
.updown::after { bottom: 0; transform: rotate(180deg); }
.crumb { flex: none; }
.crumb.second { margin: 0 4px 0 2px; }
.gridicon { margin-left: 6px; flex: none; }
.stats { margin: 0 8px 0 6px; }
.listicon { margin-left: auto; margin-right: 9px; flex: none; }

/* detail */
.detail { flex: 1; min-height: 0; display: flex; }
.side { width: 214px; flex: none; border-right: 1px solid #8a8a8a; background: #e9eef7; }
.sec { height: 16px; padding-left: 18px; font-family: "DejaVu Sans Condensed", "DejaVu Sans", sans-serif; font-weight: bold; font-size: 10.2px; line-height: 17px; position: relative; border-bottom: 1px solid #a8abb4; background: linear-gradient(#e9eef7, #e4e8f2 45%, #c6cad8); text-shadow: 0 1px 0 rgba(255,255,255,.4); }
.sec.open::before { content: ""; position: absolute; left: 4px; top: 4px; border: 4.500px solid transparent; border-bottom: 0; border-top: 8px solid #868a95; }
.sec.shut::before { content: ""; position: absolute; left: 5px; top: 3px; border: 4.500px solid transparent; border-right: 0; border-left: 8px solid #868a95; }
.sec.shut { margin-bottom: 1px; }
.sec.after { margin-bottom: 1px; }
.mark-row { height: 21px; padding: 2px 1px 0 0; display: flex; align-items: center; justify-content: center; }
.markheap { width: 78px; height: 16px; padding: 0; border: 1px solid #999; border-radius: 8px; background: linear-gradient(#fff, #ebebeb 50%, #dcdcdc 52%, #f2f2f2); font: 10px/14px "DejaVu Sans", sans-serif; color: #222; }
.opt { height: 16px; display: flex; align-items: center; padding: 0 0 0 4px; font-family: "DejaVu Sans Condensed", "DejaVu Sans", sans-serif; font-size: 10.6px; white-space: nowrap; }
.opt.off { color: #8c8c8c; }
.opt.tall { height: 18px; }
.radio { width: 11px; height: 11px; margin-right: 2px; border-radius: 50%; border: 1px solid #777; background: linear-gradient(#ddd, #fff); flex: none; margin-top: -2px; }
.radio.on { background: radial-gradient(circle, #111 0 2px, #6f9ad8 2.500px, #a8c6ec 5px); border-color: #44628e; }
.box { width: 11px; height: 11px; margin-right: 2px; border-radius: 2px; border: 1px solid #bbb; background: linear-gradient(#f0f0f0, #fff); flex: none; margin-top: -2px; }

.main { flex: 1; min-width: 0; display: flex; flex-direction: column; background: #fff; }
.table-area { flex: 1; min-height: 0; display: flex; }
.table-clip { width: 1131px; flex: none; overflow: hidden; height: 861px; }
.stats-table { width: 1131px; table-layout: fixed; border-collapse: separate; border-spacing: 0; }
.c1 { width: 43px; } .c2 { width: 133px; } .c3, .c4, .c5, .c7 { width: 78px; } .c6 { width: 93px; }
.stats-table th { height: 17px; padding: 0 12px 1px 0; font-weight: normal; text-align: right; white-space: nowrap; border-right: 1px solid #c4c4c4; border-top: 1px solid #c4c4c4; border-bottom: 1px solid #b4b4b4; background: linear-gradient(#fff, #f2f2f2 50%, #ebebeb 70%, #f6f6f6); line-height: 14px; }
.stats-table th.th-left { text-align: left; padding: 0 0 1px 5px; }
.stats-table th.tight { padding-left: 2px; }
.stats-table th.th-last { padding-left: 1px; }
.stats-table th.sorted { position: relative; background: linear-gradient(#d3e3f6, #a8c6e9 60%, #bcd3ee); border-right-color: #7c9fd0; border-left: 1px solid #7c9fd0; }
.sort-arrow { position: absolute; right: 3px; top: 4px; border: 4.500px solid transparent; border-bottom: 0; border-top: 7px solid #5a6a80; }
.stats-table td { height: 16px; padding: 0 3px 0 0; line-height: 16px; white-space: nowrap; overflow: hidden; border-right: 1px solid #dcd8e0; }
.stats-table tbody tr:nth-child(even) td { background: #ebf1fd; }
.stats-table td.g { padding: 0; }
.stats-table td.name { padding-left: 1px; }
.stats-table td.n { text-align: right; }
.stats-table td.b { padding: 0 0 0 2px; border-right: 0; }
.stats-table td.plus { text-align: center; padding: 0; border-right: 0; color: #2a46e8; letter-spacing: .5px; }
.all td { color: #2a46e8; }
.cb { width: 13px; height: 12px; margin: 0 0 0 15px; border: 1px solid #7d7d7d; border-radius: 3px; background: linear-gradient(#fff, #f2f2f2 40%, #dcdcdc 60%, #f5f5f5); }
.cb.on { background: linear-gradient(#c0d4f0, #7fa8dc 60%, #a8c6ec); border-color: #4a5e80; }
.cb svg { display: block; margin-top: -2px; }
.bar { display: block; height: 12px; position: relative; box-shadow: 1px 0 0 rgba(200,200,230,.25); }
.net { height: 12px; }
.net.tiny { width: 1px; opacity: .55; }
.bar.violet { background: #c8bcf8; } .violet .net { background: #4a00f5; }
.bar.blue { background: #bbbbfa; } .blue .net { background: #0000f5; }
.bar.red { background: #eebcbc; } .red .net { background: #e81030; }
.bar.rose { background: #efbcd2; } .rose .net { background: #f00070; }
.bar.rose2 { background: #efbcca; } .rose2 .net { background: #ea1060; }
.bar.purple { background: #d4bcfb; } .purple .net { background: #7000f0; }
.bar.magenta { background: #ebbffb; } .magenta .net { background: #e000e0; }
.bar.orchid { background: #efbce4; } .orchid .net { background: #e000a8; }

.vscroll { flex: 1; display: flex; flex-direction: column; align-items: stretch; padding-bottom: 2px; }
.vcorner { height: 17px; flex: none; border-top: 1px solid #c4c4c4; border-bottom: 1px solid #b4b4b4; background: linear-gradient(#fff, #f2f2f2 50%, #ebebeb 70%, #f6f6f6); }
.vtrack { flex: 1; padding: 6px 1px 0; border-radius: 0 0 7px 7px; background: linear-gradient(90deg, #e4e4e4, #fff 50%, #e8e8e8); box-shadow: 0 1px 1px #bbb; }
.vthumb { height: 93px; border-radius: 7px; border: 1px solid #2d4f9c; background: repeating-linear-gradient(transparent 0 7px, rgba(255,255,255,.12) 7px 14px), linear-gradient(90deg, #3c74cf, #a8ccf6 35%, #d4e6fc 55%, #88b4ee 85%, #5a8ce0); }
.varrow { height: 16px; flex: none; display: flex; align-items: center; justify-content: center; border-top: 1px solid #ddd; background: #fff; }
.tri-up { width: 0; height: 0; border: 4px solid transparent; border-top: 0; border-bottom: 7px solid #555; }
.tri-down { width: 0; height: 0; border: 4px solid transparent; border-bottom: 0; border-top: 7px solid #555; }
.footer { height: 14px; flex: none; display: flex; justify-content: flex-end; align-items: flex-end; background: linear-gradient(#e2e2e2, #f6f6f6 40%, #fff); border-bottom: 1px solid #999; }
.grip { margin-right: 1px; }
```
